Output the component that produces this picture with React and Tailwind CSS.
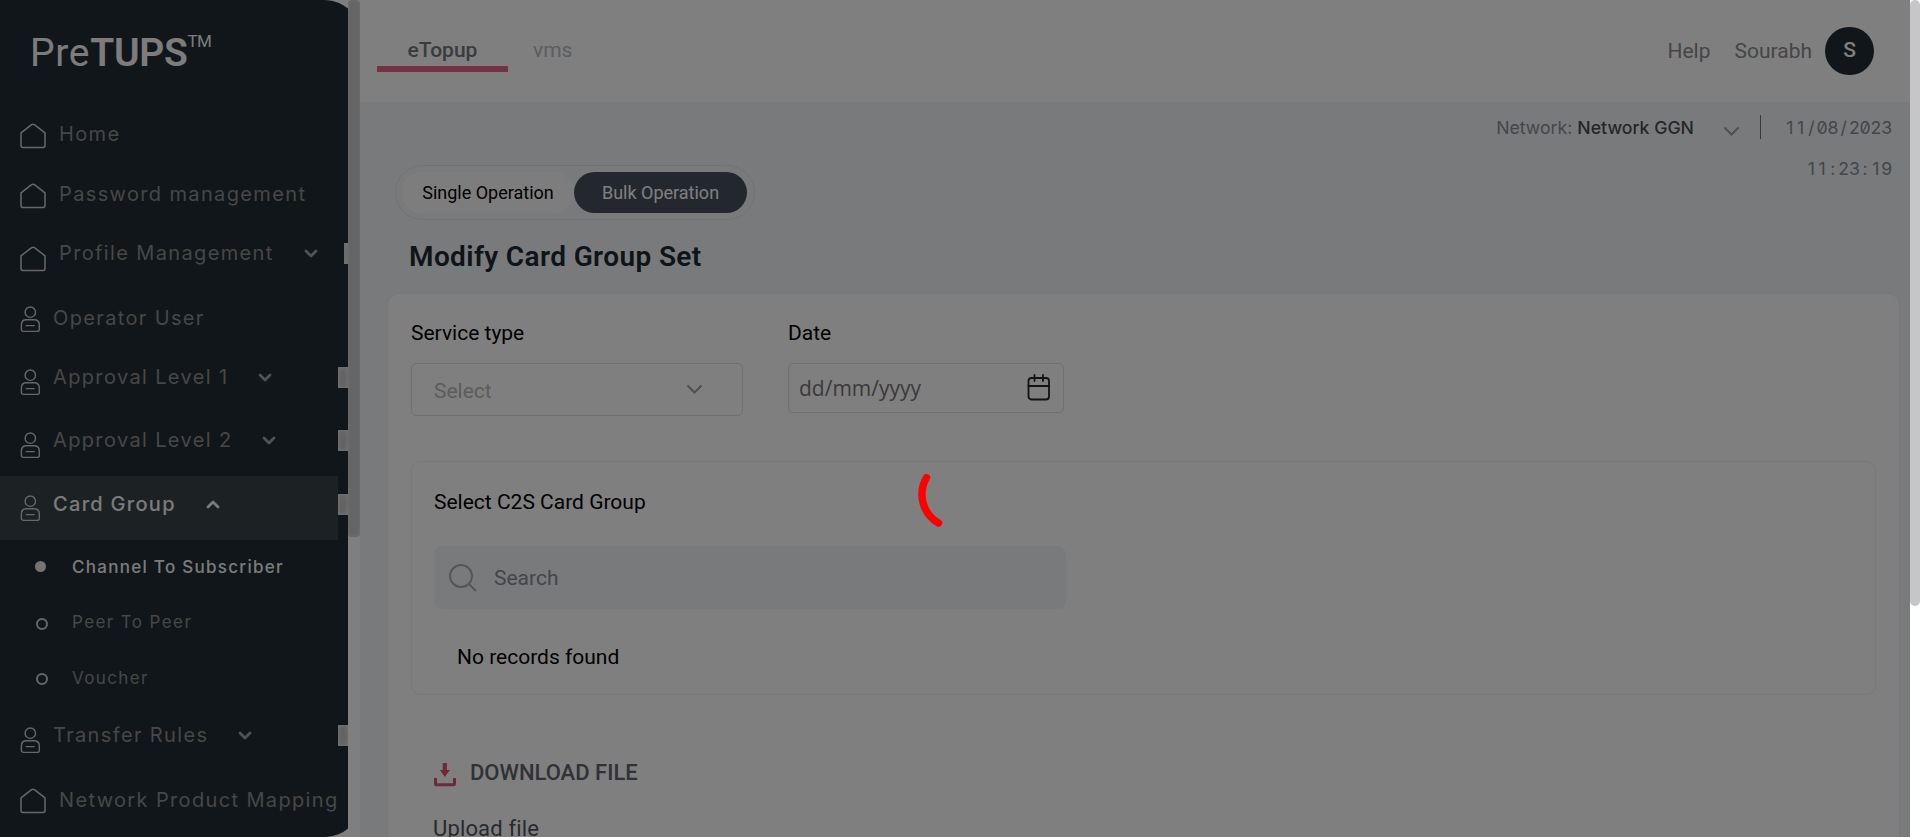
import React from "react";

const Home = ({ className = "" }) => (
  <svg className={"shrink-0 " + className} width="26" height="26" viewBox="0 0 26 26" fill="none" stroke="#cfcfcf" strokeWidth="1.5" strokeLinejoin="round">
    <path d="M1 9.8 11.6 1.7Q13 .8 14.4 1.7L25 9.8V22.6Q25 24.4 23.2 24.4H2.8Q1 24.4 1 22.6Z" />
  </svg>
);

const User = ({ className = "" }) => (
  <svg className={"shrink-0 " + className} width="20" height="27" viewBox="-0.7 0 20 27" fill="none" stroke="#cfcfcf" strokeWidth="1.4" strokeLinecap="round">
    <circle cx="9.6" cy="6.2" r="5.2" />
    <path d="M5.6 13.8H13.4Q18.6 13.8 18.6 19V23.2Q18.6 25.4 16.4 25.4H2.8Q.7 25.4 .7 23.2V19Q.7 13.8 5.6 13.8ZM5.5 19.6H13.5" />
  </svg>
);

const Chevron = ({ up, className = "" }) => (
  <svg className={"shrink-0 " + className} width="14" height="9" viewBox="0 0 14 9" fill="none" stroke={up ? "#f6f6f6" : "#a4a4a4"} strokeWidth="2.8" strokeLinecap="round" strokeLinejoin="round">
    <path d={up ? "M2 7 7 2 12 7" : "M2 2 7 7 12 2"} />
  </svg>
);

const ThinChevron = ({ className = "" }) => (
  <svg className={className} width="17" height="11" viewBox="0 0 17 11" fill="none" stroke="#a0a0a0" strokeWidth="2">
    <path d="M1.5 1.5 8.5 8.5 15.5 1.5" />
  </svg>
);

const Thumb = ({ wide, className = "" }) => (
  <span className={(wide ? "w-[10px]" : "w-1") + " ml-auto h-[21px] shrink-0 bg-[#c4c4c4] shadow-[inset_0_0_5px_#f2f2f2] " + className} />
);

function Row({ icon, label, h, iconTop, textTop, chevron, wide }) {
  const Icon = icon === "home" ? Home : User;
  return (
    <div className={h + " flex shrink-0 items-start pl-5"}>
      <Icon className={iconTop} />
      <div className={"flex grow items-center pl-[13px] " + textTop}>
        <span className="whitespace-nowrap text-[20px] leading-[24px] tracking-[1.36px] text-[#8e8e8e]">{label}</span>
        {chevron && <Chevron className="ml-[30px]" />}
        {chevron && <Thumb wide={wide} />}
      </div>
    </div>
  );
}

function Sidebar() {
  return (
    <aside className="flex h-[837px] w-[360px] shrink-0 bg-white font-['Inter',sans-serif]">
      <div className="w-[348px] shrink-0 overflow-hidden">
        <div className="h-[837px] w-[360px] rounded-r-[35px] bg-[#212d33]">
          <div className="flex h-full w-[348px] flex-col">
            <div className="flex h-[113px] shrink-0 items-start pl-[30px] pt-[31px] font-['Roboto',sans-serif] text-[39px] leading-[44px] text-[#fbf6f6]">
              <span className="tracking-[0.7px]">Pre</span>
              <span className="font-semibold tracking-[-0.3px]">TUPS</span>
              <span className="text-[17px] leading-[20px] tracking-[-0.6px]">TM</span>
            </div>
            <Row icon="home" label="Home" h="h-[60px]" iconTop="mt-[10px]" textTop="mt-[9px]" />
            <Row icon="home" label="Password management" h="h-[60px]" iconTop="mt-[10px]" textTop="mt-[9px]" />
            <Row icon="home" label="Profile Management" h="h-[64px]" iconTop="mt-[13px]" textTop="mt-2" chevron />
            <Row icon="user" label="Operator User" h="h-[60px]" iconTop="mt-[9px]" textTop="mt-[9px]" />
            <Row icon="user" label="Approval Level 1" h="h-[63px]" iconTop="mt-[12px]" textTop="mt-2" chevron wide />
            <Row icon="user" label="Approval Level 2" h="h-[56px]" iconTop="mt-[12px]" textTop="mt-2" chevron wide />
            <div className="flex h-[64px] shrink-0 items-start">
              <div className="flex h-full w-[338px] items-start bg-[#384247] pl-5">
                <User className="mt-[19px]" />
                <span className="ml-[13px] mt-4 text-[20px] font-medium leading-[24px] tracking-[1.3px] text-[#f6f6f6]">Card Group</span>
                <Chevron up className="ml-[30px] mt-[24px]" />
              </div>
              <Thumb wide className="mt-[18px]" />
            </div>
            <div className="flex h-[54px] shrink-0 items-center pl-[35px]">
              <span className="-mt-0.5 size-[11px] rounded-full bg-[#e8e8e8]" />
              <span className="ml-[26px] mt-px text-[17px] font-medium tracking-[1.28px] text-[#f6f6f6]">Channel To Subscriber</span>
            </div>
            <div className="flex h-[55px] shrink-0 items-center pl-[36px]">
              <span className="mt-1 size-[12px] rounded-full border-2 border-[#cfcfcf]" />
              <span className="ml-[24px] mt-[3px] text-[17px] tracking-[1.4px] text-[#8e8e8e]">Peer To Peer</span>
            </div>
            <div className="flex h-[56px] shrink-0 items-center pl-[36px]">
              <span className="mt-1 size-[12px] rounded-full border-2 border-[#cfcfcf]" />
              <span className="ml-[24px] mt-1 text-[17px] tracking-[1.35px] text-[#8e8e8e]">Voucher</span>
            </div>
            <Row icon="user" label="Transfer Rules" h="h-[65px]" iconTop="mt-[22px]" textTop="mt-[18px]" chevron wide />
            <Row icon="home" label="Network Product Mapping" h="h-[40px]" iconTop="mt-[18px]" textTop="mt-[18px]" />
          </div>
        </div>
      </div>
      <div className="h-full w-3 shrink-0 bg-white">
        <div className="h-[537px] w-3 rounded-[4px] bg-[#c8c8c8] shadow-[inset_0_0_5px_#e0e0e0]" />
      </div>
    </aside>
  );
}

function Header() {
  return (
    <header className="flex h-[102px] shrink-0 items-start justify-between bg-white">
      <nav className="flex pl-[17px] pt-[36px] text-[21px] leading-[28px]">
        <div className="flex h-9 w-[131px] justify-center border-b-[6px] border-[#eb6580] font-medium text-[#73787d]">eTopup</div>
        <div className="pl-[25px] text-[#b5bac4]">vms</div>
      </nav>
      <div className="flex items-center pr-[36px] pt-[27px] text-[21px] text-[#8c8c8c]">
        <span className="mt-0.5">Help</span>
        <span className="ml-6 mt-0.5">Sourabh</span>
        <span className="ml-[13px] flex h-12 w-[49px] items-center justify-center rounded-full bg-[#212d33] font-medium text-white">S</span>
      </div>
    </header>
  );
}

function Digits({ value, className = "" }) {
  return (
    <span className={"flex " + className}>
      {value.split("").map((c, i) => (
        <span key={i} className="flex w-[10.75px] justify-center">{c}</span>
      ))}
    </span>
  );
}

function InfoBar() {
  return (
    <div className="flex h-[63px] shrink-0 justify-end pr-[18px] pt-[13px] text-[17.7px] leading-[25px] text-[#868d95]">
      <span className="font-['Inter',sans-serif]">Network:</span>
      <span className="ml-[5px] font-['Inter',sans-serif] font-medium text-[#4d4d4d]">Network GGN</span>
      <ThinChevron className="ml-[29px] mt-[11px]" />
      <span className="ml-5 h-6 w-px bg-[#69747f]" />
      <div className="flex w-[131px] flex-col items-end font-['Inter',sans-serif] text-[17.7px] leading-[25px] slashed-zero">
        <Digits value="11/08/2023" />
        <Digits value="11:23:19" className="mt-4" />
      </div>
    </div>
  );
}

function Content() {
  return (
    <div className="ml-[27px] mr-[10px] mt-5 h-[560px] shrink-0 rounded-t-[12px] border border-[#eceef2] bg-white px-[23px] text-[21px]">
      <div className="flex pt-[27px]">
        <div className="w-[377px]">
          <div className="leading-6 text-black">Service type</div>
          <div className="mt-[18px] flex h-[53px] w-[332px] items-center justify-between rounded-[5px] border border-[#e0e0e0] pl-[22px] pr-[39px] text-[#b8b8b8]">
            <span className="mt-[5px]">Select</span>
            <ThinChevron />
          </div>
        </div>
        <div>
          <div className="leading-6 text-black">Date</div>
          <div className="mt-[18px] flex h-[50px] w-[276px] items-center justify-between rounded-[5px] border border-[#e0e0e0] pl-[10px] pr-[12px] text-[#757575]">
            <span className="mt-0.5 font-['Open_Sans',sans-serif]">dd/mm/yyyy</span>
            <svg className="-mt-px" width="24" height="27" viewBox="0 0 24 27" fill="none" stroke="#212529" strokeWidth="1.8" strokeLinecap="round">
              <rect x="1.5" y="4" width="20.5" height="21.5" rx="3" />
              <path d="M1.5 12H22M7.5 1V7M16 1V7" />
            </svg>
          </div>
        </div>
      </div>
      <section className="mt-[45px] h-[234px] rounded-[10px] border border-[#eef0f4] pl-[22px] text-black">
        <div className="pt-[28px] leading-6">Select C2S Card Group</div>
        <div className="mt-[32px] flex h-[63px] w-[632px] items-center rounded-[8px] bg-[#f3f5f9] pl-[15px] text-[#878c92]">
          <svg width="28" height="28" viewBox="0 0 28 28" fill="none" stroke="#a6abb3" strokeWidth="1.9">
            <circle cx="12" cy="12" r="11" />
            <path d="M20 20 27 27" />
          </svg>
          <span className="ml-[17px] mt-0.5">Search</span>
        </div>
        <div className="ml-[23px] mt-[36px] leading-6">No records found</div>
      </section>
      <div className="ml-[23px] mt-[65px] flex h-6 items-center text-[22px] font-medium text-[#5f656c]">
        <svg className="mt-[5px]" width="22" height="24" viewBox="0 0 22 24">
          <path d="M8.7 0h4.2v7h3L10.8 14 5.9 7h2.8z" fill="#e2506d" />
          <path d="M1.5 15v6q0 .8.8.8h17.4q.8 0 .8-.8V15" fill="none" stroke="#e2506d" strokeWidth="3" />
        </svg>
        <span className="ml-[14px] mt-px leading-6">DOWNLOAD FILE</span>
      </div>
      <div className="ml-[22px] mt-[33px] text-[22px] leading-6 tracking-[0.15px] text-[#4e5560]">Upload file</div>
    </div>
  );
}

export default function App() {
  return (
    <div className="relative flex h-[837px] w-[1920px] overflow-hidden bg-white font-['Roboto',sans-serif]">
      <Sidebar />
      <main className="flex h-[837px] w-[1550px] flex-col overflow-hidden bg-[#f3f5f9]">
        <Header />
        <InfoBar />
        <div className="ml-[35px] flex h-[55px] w-[360px] shrink-0 items-center rounded-[28px] border border-[#e3e5e9] pl-[6px] text-[18px]">
          <span className="flex h-[41px] w-[172px] items-center justify-center rounded-full bg-[#fbfbfb] text-black">Single Operation</span>
          <span className="flex h-[41px] w-[173px] items-center justify-center rounded-full bg-[#464e5c] text-white">Bulk Operation</span>
        </div>
        <h1 className="ml-[49px] mt-[21px] shrink-0 text-[28px] font-semibold leading-8 tracking-[0.38px] text-[#1d2a31]">Modify Card Group Set</h1>
        <Content />
      </main>
      <div className="w-[10px] shrink-0 bg-white">
        <div className="h-[606px] rounded-full bg-[#c6c6c9]" />
      </div>
      <div className="absolute inset-y-0 left-0 flex w-[1910px] bg-black/50">
        <svg className="ml-[917px] mt-[473px]" width="28" height="56" viewBox="0 0 28 56" fill="none" stroke="#ff0000" strokeWidth="7.4" strokeLinecap="round">
          <path d="M9.5 4.7A33 33 0 0 0 21.5 50" />
        </svg>
      </div>
    </div>
  );
}
